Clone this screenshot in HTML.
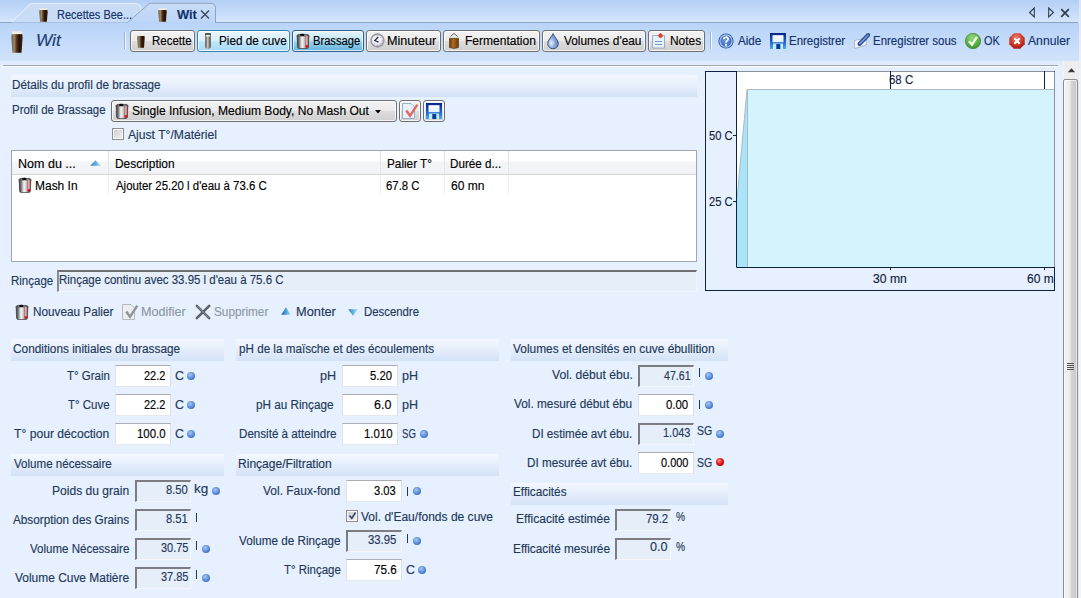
<!DOCTYPE html><html><head><meta charset="utf-8"><style>
*{margin:0;padding:0;box-sizing:border-box}
html,body{width:1081px;height:598px;overflow:hidden;background:#e7f0fe;font-family:"Liberation Sans",sans-serif;font-size:12px}
.a{position:absolute}
.ic{position:absolute;overflow:visible}
.tx{position:absolute;white-space:nowrap;line-height:14px;transform-origin:0 0;-webkit-text-stroke:0.15px currentColor}
.btn{position:absolute;border:1px solid #707070;border-radius:3px;box-shadow:inset 0 0 0 1px rgba(255,255,255,.75);background:linear-gradient(#f2f2f2 0%,#ebebeb 48%,#dddddd 52%,#cfcfcf 100%)}
.inp{position:absolute;background:#fff;border:1px solid;border-color:#abadb3 #dbdfe6 #e3e9ef #e2e3ea}
.ro{position:absolute;background:#e6eef9;border-style:solid;border-width:2px 1px 1px 2px;border-color:#7b7d80 #f4f6f8 #f4f6f8 #7b7d80}
.hdr{position:absolute;background:linear-gradient(#f5f9ff,#d3e2f8)}
</style></head><body>
<div class="a" style="left:0;top:0;width:1081px;height:23px;background:linear-gradient(#b3cff6,#d7e7fc)"></div>
<div class="a" style="left:0;top:22px;width:1078px;height:1px;background:#8da2c0"></div>
<svg class="ic" style="left:0;top:0;width:220px;height:23px" viewBox="0 0 220 23">
<defs><linearGradient id="tabA" x1="0" y1="0" x2="0" y2="1"><stop offset="0" stop-color="#cadcf6"/><stop offset="1" stop-color="#c9ddf8"/></linearGradient>
<linearGradient id="tabB" x1="0" y1="0" x2="0" y2="1"><stop offset="0" stop-color="#c8dcf7"/><stop offset="1" stop-color="#bcd5f8"/></linearGradient></defs>
<path d="M12 22.5 L30 4 Q31 3.5 32 3.5 L136 3.5 Q140 3.5 140.5 7 L140.5 22.5 Z" fill="url(#tabA)"/><path d="M12 22 L30 4 Q31 3.5 32 3.5 L136 3.5 Q140 3.5 140.5 7 L140.5 22" fill="none" stroke="#e4eefc" stroke-width="1"/>
<path d="M127 23.5 L149 3.8 Q150 3.3 151.5 3.3 L211 3.3 Q215 3.3 215.5 7 L215.5 23.5 Z" fill="url(#tabB)"/><path d="M127 23 L149 3.8 Q150 3.3 151.5 3.3 L211 3.3 Q215 3.3 215.5 7 L215.5 23" fill="none" stroke="#8fa3bf" stroke-width="1"/>
<rect x="128" y="22" width="87" height="2" fill="#bad4f8"/>
</svg>
<svg class="ic" style="left:38.5px;top:8px;width:9px;height:14px" viewBox="0 0 9 14" preserveAspectRatio="none"><defs><linearGradient id="g1" x1="0" x2="1"><stop offset="0" stop-color="#6a5a42"/><stop offset="0.25" stop-color="#9a8a6c"/><stop offset="0.45" stop-color="#5a3a1c"/><stop offset="0.7" stop-color="#241004"/><stop offset="1" stop-color="#3a2410"/></linearGradient></defs>
<path d="M0.6 1.8 H8.4 L8.7 4.2 L7.9 13.8 H1.1 L0.3 4.2 Z" fill="url(#g1)"/>
<path d="M0.6 0.2 H8.4 V2 H0.6 Z" fill="#f2ece0"/></svg>
<svg class="ic" style="left:157.5px;top:8px;width:9px;height:14px" viewBox="0 0 9 14" preserveAspectRatio="none"><defs><linearGradient id="g2" x1="0" x2="1"><stop offset="0" stop-color="#6a5a42"/><stop offset="0.25" stop-color="#9a8a6c"/><stop offset="0.45" stop-color="#5a3a1c"/><stop offset="0.7" stop-color="#241004"/><stop offset="1" stop-color="#3a2410"/></linearGradient></defs>
<path d="M0.6 1.8 H8.4 L8.7 4.2 L7.9 13.8 H1.1 L0.3 4.2 Z" fill="url(#g2)"/>
<path d="M0.6 0.2 H8.4 V2 H0.6 Z" fill="#f2ece0"/></svg>
<svg class="ic" style="left:200px;top:10px;width:10px;height:9px" viewBox="0 0 10 9"><path d="M1 0.5 L9 8.5 M9 0.5 L1 8.5" stroke="#3c4a5c" stroke-width="1.4"/></svg>
<svg class="ic" style="left:1028px;top:7px;width:8px;height:11px" viewBox="0 0 8 11"><path d="M6.3 1 L1.5 5.5 L6.3 10 Z" fill="none" stroke="#2e3e52" stroke-width="1.1"/></svg>
<svg class="ic" style="left:1047px;top:7px;width:8px;height:11px" viewBox="0 0 8 11"><path d="M1.7 1 L6.5 5.5 L1.7 10 Z" fill="none" stroke="#2e3e52" stroke-width="1.1"/></svg>
<svg class="ic" style="left:1060px;top:8px;width:10px;height:10px" viewBox="0 0 10 10"><path d="M1.2 1.2 L8.8 8.8 M8.8 1.2 L1.2 8.8" stroke="#2e3e52" stroke-width="1.7"/></svg>
<div class="a" style="left:0;top:23px;width:1079px;height:38px;background:linear-gradient(#b9d4f8,#d0e3fb)"></div>
<div class="a" style="left:0;top:61px;width:1063px;height:4px;background:#e0ecfd"></div>
<div class="a" style="left:3px;top:65px;width:1055px;height:1px;background:#a3a7ad"></div>
<div class="a" style="left:3px;top:66px;width:1055px;height:1px;background:#fbfdff"></div>
<div class="a" style="left:1079px;top:0;width:2px;height:598px;background:linear-gradient(#d8e6f9,#edf3fb 12%,#eef4fc)"></div>
<svg class="ic" style="left:11px;top:31px;width:12px;height:22px" viewBox="0 0 9 14" preserveAspectRatio="none"><defs><linearGradient id="g3" x1="0" x2="1"><stop offset="0" stop-color="#6a5a42"/><stop offset="0.25" stop-color="#9a8a6c"/><stop offset="0.45" stop-color="#5a3a1c"/><stop offset="0.7" stop-color="#241004"/><stop offset="1" stop-color="#3a2410"/></linearGradient></defs>
<path d="M0.6 1.8 H8.4 L8.7 4.2 L7.9 13.8 H1.1 L0.3 4.2 Z" fill="url(#g3)"/>
<path d="M0.6 0.2 H8.4 V2 H0.6 Z" fill="#f2ece0"/></svg>
<div class="a" style="left:124px;top:32px;width:1px;height:17px;background:#9fb3cc"></div>
<div class="a" style="left:125px;top:32px;width:1px;height:17px;background:#f4f8fd"></div>
<div class="a" style="left:710px;top:32px;width:1px;height:17px;background:#9fb3cc"></div>
<div class="a" style="left:711px;top:32px;width:1px;height:17px;background:#f4f8fd"></div>
<div class="btn" style="left:130px;top:30px;width:65px;height:22px"></div>
<div class="btn" style="left:197px;top:30px;width:93px;height:22px;border-color:#3c7fb1;background:linear-gradient(#eaf6fd 0%,#d9f0fc 45%,#bee6fd 55%,#a7d9f5 100%)"></div>
<div class="btn" style="left:292px;top:30px;width:72px;height:22px;border-color:#2c628b;background:linear-gradient(#e5f4fc 0%,#c4e5f6 45%,#98d1ef 55%,#68b3db 100%)"></div>
<div class="btn" style="left:366px;top:30px;width:75px;height:22px"></div>
<div class="btn" style="left:443px;top:30px;width:97px;height:22px"></div>
<div class="btn" style="left:542px;top:30px;width:104px;height:22px"></div>
<div class="btn" style="left:648px;top:30px;width:57px;height:22px"></div>
<svg class="ic" style="left:137px;top:34px;width:8px;height:14px" viewBox="0 0 9 14" preserveAspectRatio="none"><defs><linearGradient id="g4" x1="0" x2="1"><stop offset="0" stop-color="#6a5a42"/><stop offset="0.25" stop-color="#9a8a6c"/><stop offset="0.45" stop-color="#5a3a1c"/><stop offset="0.7" stop-color="#241004"/><stop offset="1" stop-color="#3a2410"/></linearGradient></defs>
<path d="M0.6 1.8 H8.4 L8.7 4.2 L7.9 13.8 H1.1 L0.3 4.2 Z" fill="url(#g4)"/>
<path d="M0.6 0.2 H8.4 V2 H0.6 Z" fill="#f2ece0"/></svg>
<svg class="ic" style="left:205px;top:33px;width:6px;height:16px" viewBox="0 0 6 16" preserveAspectRatio="none"><defs><linearGradient id="g5" x1="0" x2="1"><stop offset="0" stop-color="#4a3a30"/><stop offset="0.45" stop-color="#d8ccc4"/><stop offset="1" stop-color="#3e3028"/></linearGradient></defs>
<path d="M0.3 1 H5.7 V13.3 A2.7 2.7 0 0 1 0.3 13.3 Z" fill="url(#g5)"/><rect x="0" y="0" width="6" height="2.2" rx="0.6" fill="#5a5a5a"/><rect x="0.8" y="2.2" width="4.4" height="1.2" fill="#fff"/></svg>
<svg class="ic" style="left:296px;top:33px;width:14px;height:16px" viewBox="0 0 14 16" preserveAspectRatio="none"><defs><linearGradient id="g6" x1="0" x2="1"><stop offset="0" stop-color="#2a2a2a"/><stop offset="0.2" stop-color="#8a8a8a"/><stop offset="0.42" stop-color="#f8f8f8"/><stop offset="0.62" stop-color="#c4c4c4"/><stop offset="0.85" stop-color="#5a5a5a"/><stop offset="1" stop-color="#2e2e2e"/></linearGradient>
<linearGradient id="g7" x1="0" x2="1"><stop offset="0" stop-color="#b86a6a"/><stop offset="0.5" stop-color="#f0c4c4"/><stop offset="1" stop-color="#a84848"/></linearGradient></defs>
<path d="M1.2 3 Q1.2 1.4 3 1.4 L11 1.4 Q12.8 1.4 12.8 3 L12.4 14 Q12.2 15.5 10.6 15.5 L3.4 15.5 Q1.8 15.5 1.6 14 Z" fill="url(#g6)" stroke="#383838" stroke-width="0.7"/>
<path d="M0.3 2.6 H13.7 V3.4 H0.3 Z" fill="#4a4a4a" opacity="0.8"/>
<ellipse cx="6.3" cy="1.9" rx="2.3" ry="1.2" fill="#0a0a0a"/>
<rect x="9.6" y="2.8" width="2.6" height="11.2" rx="0.8" fill="url(#g7)"/>
<circle cx="10.9" cy="13.4" r="1.4" fill="#e8101a"/></svg>
<svg class="ic" style="left:370px;top:33px;width:16px;height:15px" viewBox="0 0 16 15" preserveAspectRatio="none"><defs><radialGradient id="g8" cx="0.4" cy="0.35" r="0.7"><stop offset="0" stop-color="#ffffff"/><stop offset="0.7" stop-color="#e8ecf4"/><stop offset="1" stop-color="#b0b8c8"/></radialGradient></defs>
<circle cx="7.5" cy="7.5" r="7.2" fill="#9a9ca8"/><circle cx="7.5" cy="7.5" r="5.6" fill="url(#g8)"/>
<g fill="#e080a0"><circle cx="7.5" cy="2.8" r="0.6"/><circle cx="12.2" cy="7.5" r="0.6"/><circle cx="7.5" cy="12.2" r="0.6"/><circle cx="10.8" cy="4.2" r="0.5"/><circle cx="10.8" cy="10.8" r="0.5"/><circle cx="4.2" cy="10.8" r="0.5"/></g>
<path d="M8.2 4 L4.8 7.6 L8.6 9.2" stroke="#2a3448" stroke-width="1.4" fill="none"/></svg>
<svg class="ic" style="left:449px;top:33px;width:10px;height:16px" viewBox="0 0 10 16" preserveAspectRatio="none"><defs><linearGradient id="g9" x1="0" x2="1"><stop offset="0" stop-color="#6a3a0c"/><stop offset="0.4" stop-color="#b06a1e"/><stop offset="1" stop-color="#6a380c"/></linearGradient></defs>
<path d="M5 0.5 L0.8 4 M5 0.5 L9.2 4" stroke="#505050" stroke-width="0.9"/>
<rect x="0.3" y="3.5" width="9.4" height="2" fill="#f4f0ea"/>
<path d="M0.5 5.3 H9.5 V14.5 L5 15.5 L0.5 14.5 Z" fill="url(#g9)" stroke="#4a2a0a" stroke-width="0.6"/></svg>
<svg class="ic" style="left:547px;top:33px;width:12px;height:16px" viewBox="0 0 12 16" preserveAspectRatio="none"><defs><radialGradient id="g10" cx="0.35" cy="0.62" r="0.75"><stop offset="0" stop-color="#eef2fb"/><stop offset="0.45" stop-color="#8aa8dc"/><stop offset="1" stop-color="#4a78c0"/></radialGradient></defs>
<path d="M6 0.6 C7 3.5 11.4 7.2 11.4 10.4 A5.4 5.4 0 0 1 0.6 10.4 C0.6 7.2 5 3.5 6 0.6 Z" fill="url(#g10)" stroke="#3a4e70" stroke-width="0.9"/></svg>
<svg class="ic" style="left:652px;top:33px;width:14px;height:16px" viewBox="0 0 14 16" preserveAspectRatio="none"><path d="M0.5 2.5 H12.5 V15 H0.5 Z" fill="#e4f0fc" stroke="#8a9cbc" stroke-width="0.8"/>
<path d="M3 8.5 H10 M3 11.5 H10" stroke="#7a98c8" stroke-width="1"/>
<path d="M8.2 0 L10.3 1.2 L10.8 3.6 L9 5 L6.8 4.4 L6.2 2 Z" fill="#e04030"/></svg>
<svg class="ic" style="left:718px;top:33px;width:16px;height:16px" viewBox="0 0 16 16" preserveAspectRatio="none"><defs><radialGradient id="g11" cx="0.45" cy="0.45" r="0.6"><stop offset="0" stop-color="#6a9ae0"/><stop offset="1" stop-color="#3a68c0"/></radialGradient></defs>
<circle cx="8" cy="8" r="7.6" fill="#2a4e98"/><circle cx="8" cy="8" r="6.7" fill="#b0cdf2"/><circle cx="8" cy="8" r="5.6" fill="url(#g11)"/>
<path d="M5.8 6.2 C5.8 3.6 10.2 3.6 10.2 6 C10.2 7.6 8 7.8 8 9.8" stroke="#fff" stroke-width="1.7" fill="none"/><rect x="7" y="10.9" width="2" height="1.9" fill="#fff"/></svg>
<svg class="ic" style="left:770px;top:33px;width:16px;height:16px" viewBox="0 0 16 16" preserveAspectRatio="none"><defs><linearGradient id="g12" x1="0" y1="0" x2="0" y2="1"><stop offset="0" stop-color="#0a2288"/><stop offset="0.5" stop-color="#1a5ac8"/><stop offset="1" stop-color="#48b0ee"/></linearGradient>
<linearGradient id="g13" x1="0" y1="0" x2="0" y2="1"><stop offset="0" stop-color="#ffffff"/><stop offset="1" stop-color="#dff0ff"/></linearGradient></defs>
<rect x="0" y="0" width="16" height="16" fill="url(#g12)"/>
<rect x="2.5" y="2.2" width="11" height="7" fill="url(#g13)"/>
<rect x="3" y="10.5" width="10" height="5.5" fill="#c8ecff"/><rect x="6.3" y="11" width="4" height="5" fill="#0a3a9a"/></svg>
<svg class="ic" style="left:854px;top:32px;width:17px;height:17px" viewBox="0 0 17 17" preserveAspectRatio="none"><path d="M0.5 8.5 L12 6 L12.3 13 L0.6 16.5 Z" fill="#f4f8fe" stroke="#a0a8b8" stroke-width="0.8"/>
<path d="M5.5 12 L14.2 3" stroke="#2e4a90" stroke-width="4" stroke-linecap="round"/>
<path d="M5.8 11.6 L14 3.3" stroke="#7a9ae0" stroke-width="1.6" stroke-linecap="round"/></svg>
<svg class="ic" style="left:965px;top:33px;width:16px;height:16px" viewBox="0 0 16 16" preserveAspectRatio="none"><defs><radialGradient id="g14" cx="0.45" cy="0.3" r="0.75"><stop offset="0" stop-color="#9ad880"/><stop offset="0.6" stop-color="#5ab040"/><stop offset="1" stop-color="#3a8a30"/></radialGradient></defs>
<circle cx="8" cy="8" r="7.7" fill="url(#g14)" stroke="#3a7a3a" stroke-width="0.6"/>
<path d="M3.9 8.2 L7 11.6 L12 3.8" stroke="#f4fff0" stroke-width="2.3" fill="none"/></svg>
<svg class="ic" style="left:1009px;top:33px;width:16px;height:16px" viewBox="0 0 16 16" preserveAspectRatio="none"><defs><radialGradient id="g15" cx="0.45" cy="0.3" r="0.75"><stop offset="0" stop-color="#f08070"/><stop offset="0.55" stop-color="#d03828"/><stop offset="1" stop-color="#a01810"/></radialGradient></defs>
<path d="M4.8 0.3 H11.2 L15.7 4.8 V11.2 L11.2 15.7 H4.8 L0.3 11.2 V4.8 Z" fill="url(#g15)"/>
<path d="M5.3 5.3 L10.7 10.7 M10.7 5.3 L5.3 10.7" stroke="#fff" stroke-width="2.1"/></svg>
<div class="a" style="left:1063px;top:61px;width:16px;height:537px;background:linear-gradient(90deg,#f6f6f6,#ececec 10%,#eeeeee 90%,#e8e8e8)"></div>
<svg class="ic" style="left:1067px;top:67px;width:9px;height:6px" viewBox="0 0 9 6"><path d="M0.8 5.2 L4.5 1.2 L8.2 5.2 Z" fill="#3a3a3a"/></svg>
<div class="a" style="left:1063px;top:79px;width:15px;height:530px;border:1px solid #8e8e8e;border-radius:2px;box-shadow:inset 0 0 0 1px rgba(255,255,255,.6);background:linear-gradient(90deg,#f4f4f4,#ececec 45%,#d6d6d6 55%,#c6c6c6)"></div>
<div class="a" style="left:1067px;top:363px;width:7px;height:7px;background:repeating-linear-gradient(#555 0 1px,transparent 1px 2px)"></div>
<div class="hdr" style="left:11px;top:75px;width:686px;height:22px"></div>
<div class="btn" style="left:111px;top:100px;width:286px;height:22px;border-color:#707070"></div>
<svg class="ic" style="left:375px;top:110px;width:6px;height:4px" viewBox="0 0 6 4"><path d="M0 0 H6 L3 3.5 Z" fill="#000"/></svg>
<svg class="ic" style="left:115px;top:103px;width:14px;height:16px" viewBox="0 0 14 16" preserveAspectRatio="none"><defs><linearGradient id="g16" x1="0" x2="1"><stop offset="0" stop-color="#2a2a2a"/><stop offset="0.2" stop-color="#8a8a8a"/><stop offset="0.42" stop-color="#f8f8f8"/><stop offset="0.62" stop-color="#c4c4c4"/><stop offset="0.85" stop-color="#5a5a5a"/><stop offset="1" stop-color="#2e2e2e"/></linearGradient>
<linearGradient id="g17" x1="0" x2="1"><stop offset="0" stop-color="#b86a6a"/><stop offset="0.5" stop-color="#f0c4c4"/><stop offset="1" stop-color="#a84848"/></linearGradient></defs>
<path d="M1.2 3 Q1.2 1.4 3 1.4 L11 1.4 Q12.8 1.4 12.8 3 L12.4 14 Q12.2 15.5 10.6 15.5 L3.4 15.5 Q1.8 15.5 1.6 14 Z" fill="url(#g16)" stroke="#383838" stroke-width="0.7"/>
<path d="M0.3 2.6 H13.7 V3.4 H0.3 Z" fill="#4a4a4a" opacity="0.8"/>
<ellipse cx="6.3" cy="1.9" rx="2.3" ry="1.2" fill="#0a0a0a"/>
<rect x="9.6" y="2.8" width="2.6" height="11.2" rx="0.8" fill="url(#g17)"/>
<circle cx="10.9" cy="13.4" r="1.4" fill="#e8101a"/></svg>
<div class="btn" style="left:399px;top:100px;width:22px;height:22px;border-color:#707070"></div>
<div class="btn" style="left:423px;top:100px;width:22px;height:22px;border-color:#707070"></div>
<svg class="ic" style="left:402px;top:103px;width:16px;height:16px" viewBox="0 0 16 16" preserveAspectRatio="none"><path d="M0.5 0.5 H9 L12.5 4 V15.5 H0.5 Z" fill="#e8f2fc" stroke="#8aa0c0" stroke-width="0.8"/>
<path d="M4.3 7.5 L8 12.8 L15.3 1.6" stroke="#e06a60" stroke-width="2.4" fill="none"/></svg>
<svg class="ic" style="left:426px;top:103px;width:16px;height:16px" viewBox="0 0 16 16" preserveAspectRatio="none"><defs><linearGradient id="g18" x1="0" y1="0" x2="0" y2="1"><stop offset="0" stop-color="#0a2288"/><stop offset="0.5" stop-color="#1a5ac8"/><stop offset="1" stop-color="#48b0ee"/></linearGradient>
<linearGradient id="g19" x1="0" y1="0" x2="0" y2="1"><stop offset="0" stop-color="#ffffff"/><stop offset="1" stop-color="#dff0ff"/></linearGradient></defs>
<rect x="0" y="0" width="16" height="16" fill="url(#g18)"/>
<rect x="2.5" y="2.2" width="11" height="7" fill="url(#g19)"/>
<rect x="3" y="10.5" width="10" height="5.5" fill="#c8ecff"/><rect x="6.3" y="11" width="4" height="5" fill="#0a3a9a"/></svg>
<div class="a" style="left:112px;top:128px;width:12px;height:12px;border:1px solid #8e8f8f;box-shadow:inset 0 0 0 1px #fbfbfb;background:linear-gradient(135deg,#cdcdcd,#f2f2f2)"></div>
<div class="a" style="left:11px;top:150px;width:686px;height:112px;background:#fff;border:1px solid #a0a6ae"></div>
<div class="a" style="left:12px;top:151px;width:684px;height:23px;background:linear-gradient(#ffffff 0%,#ffffff 42%,#f4f5f7 50%,#f1f2f5 100%)"></div>
<div class="a" style="left:12px;top:174px;width:684px;height:1px;background:#d5d5d5"></div>
<div class="a" style="left:108px;top:151px;width:1px;height:23px;background:#e2e4e7"></div>
<div class="a" style="left:108px;top:176px;width:1px;height:18px;background:#ececec"></div>
<div class="a" style="left:380px;top:151px;width:1px;height:23px;background:#e2e4e7"></div>
<div class="a" style="left:380px;top:176px;width:1px;height:18px;background:#ececec"></div>
<div class="a" style="left:444px;top:151px;width:1px;height:23px;background:#e2e4e7"></div>
<div class="a" style="left:444px;top:176px;width:1px;height:18px;background:#ececec"></div>
<div class="a" style="left:508px;top:151px;width:1px;height:23px;background:#e2e4e7"></div>
<div class="a" style="left:508px;top:176px;width:1px;height:18px;background:#ececec"></div>
<svg class="ic" style="left:90px;top:160px;width:11px;height:6px" viewBox="0 0 11 6"><defs><linearGradient id="srt" x1="0" x2="1"><stop offset="0" stop-color="#3a7ab8"/><stop offset="0.5" stop-color="#5ab0e0"/><stop offset="1" stop-color="#a8dcf4"/></linearGradient></defs><path d="M5.5 0.2 L10.8 5.8 H0.2 Z" fill="url(#srt)"/></svg>
<svg class="ic" style="left:18px;top:177px;width:14px;height:16px" viewBox="0 0 14 16" preserveAspectRatio="none"><defs><linearGradient id="g20" x1="0" x2="1"><stop offset="0" stop-color="#2a2a2a"/><stop offset="0.2" stop-color="#8a8a8a"/><stop offset="0.42" stop-color="#f8f8f8"/><stop offset="0.62" stop-color="#c4c4c4"/><stop offset="0.85" stop-color="#5a5a5a"/><stop offset="1" stop-color="#2e2e2e"/></linearGradient>
<linearGradient id="g21" x1="0" x2="1"><stop offset="0" stop-color="#b86a6a"/><stop offset="0.5" stop-color="#f0c4c4"/><stop offset="1" stop-color="#a84848"/></linearGradient></defs>
<path d="M1.2 3 Q1.2 1.4 3 1.4 L11 1.4 Q12.8 1.4 12.8 3 L12.4 14 Q12.2 15.5 10.6 15.5 L3.4 15.5 Q1.8 15.5 1.6 14 Z" fill="url(#g20)" stroke="#383838" stroke-width="0.7"/>
<path d="M0.3 2.6 H13.7 V3.4 H0.3 Z" fill="#4a4a4a" opacity="0.8"/>
<ellipse cx="6.3" cy="1.9" rx="2.3" ry="1.2" fill="#0a0a0a"/>
<rect x="9.6" y="2.8" width="2.6" height="11.2" rx="0.8" fill="url(#g21)"/>
<circle cx="10.9" cy="13.4" r="1.4" fill="#e8101a"/></svg>
<div class="a" style="left:57px;top:270px;width:640px;height:22px;border-style:solid;border-width:2px 1px 1px 2px;border-color:#6e7072 #f2f5f9 #f2f5f9 #8a8c8e;background:#e6eef9"></div>
<svg class="ic" style="left:15px;top:304px;width:14px;height:16px" viewBox="0 0 14 16" preserveAspectRatio="none"><defs><linearGradient id="g22" x1="0" x2="1"><stop offset="0" stop-color="#2a2a2a"/><stop offset="0.2" stop-color="#8a8a8a"/><stop offset="0.42" stop-color="#f8f8f8"/><stop offset="0.62" stop-color="#c4c4c4"/><stop offset="0.85" stop-color="#5a5a5a"/><stop offset="1" stop-color="#2e2e2e"/></linearGradient>
<linearGradient id="g23" x1="0" x2="1"><stop offset="0" stop-color="#b86a6a"/><stop offset="0.5" stop-color="#f0c4c4"/><stop offset="1" stop-color="#a84848"/></linearGradient></defs>
<path d="M1.2 3 Q1.2 1.4 3 1.4 L11 1.4 Q12.8 1.4 12.8 3 L12.4 14 Q12.2 15.5 10.6 15.5 L3.4 15.5 Q1.8 15.5 1.6 14 Z" fill="url(#g22)" stroke="#383838" stroke-width="0.7"/>
<path d="M0.3 2.6 H13.7 V3.4 H0.3 Z" fill="#4a4a4a" opacity="0.8"/>
<ellipse cx="6.3" cy="1.9" rx="2.3" ry="1.2" fill="#0a0a0a"/>
<rect x="9.6" y="2.8" width="2.6" height="11.2" rx="0.8" fill="url(#g23)"/>
<circle cx="10.9" cy="13.4" r="1.4" fill="#e8101a"/></svg>
<svg class="ic" style="left:122px;top:304px;width:16px;height:16px" viewBox="0 0 16 16" preserveAspectRatio="none"><path d="M0.5 0.5 H9 L12.5 4 V15.5 H0.5 Z" fill="#eceef0" stroke="#a8acb0" stroke-width="0.8"/>
<path d="M4.3 7.5 L8 12.8 L15.3 1.6" stroke="#909498" stroke-width="2.4" fill="none"/></svg>
<svg class="ic" style="left:195px;top:304px;width:16px;height:16px" viewBox="0 0 16 16" preserveAspectRatio="none"><path d="M1.8 1.8 L14.2 14.2 M14.2 1.8 L1.8 14.2" stroke="#5e6268" stroke-width="2.6" stroke-linecap="round"/>
<path d="M2.2 1.8 L14 13.8" stroke="#9aa0a8" stroke-width="0.8"/></svg>
<svg class="ic" style="left:281px;top:307px;width:10px;height:8px" viewBox="0 0 10 8" preserveAspectRatio="none"><defs><linearGradient id="g24" x1="0" x2="1"><stop offset="0" stop-color="#1a5aa0"/><stop offset="0.5" stop-color="#4aa0e0"/><stop offset="1" stop-color="#b0e0f8"/></linearGradient></defs><path d="M5 0.3 L9.8 7.7 H0.2 Z" fill="url(#g24)"/></svg>
<svg class="ic" style="left:348px;top:309px;width:10px;height:7px" viewBox="0 0 10 7" preserveAspectRatio="none"><defs><linearGradient id="g25" x1="0" x2="1"><stop offset="0" stop-color="#2a70b0"/><stop offset="0.5" stop-color="#5ab8e8"/><stop offset="1" stop-color="#a8dcf4"/></linearGradient></defs><path d="M0.2 0.3 H9.8 L5 6.7 Z" fill="url(#g25)"/></svg>
<div class="a" style="left:705px;top:71px;width:350px;height:220px;border:1px solid #0f2340"></div>
<svg class="ic" style="left:705px;top:71px;width:350px;height:220px" viewBox="705 71 350 220">
<rect x="736.5" y="71.5" width="318" height="196" fill="#fff"/>
<path d="M737 267 L737 199 L747 89.5 L1054 89.5 L1054 267 Z" fill="#d3f3fd"/>
<path d="M737 267 L737 199 L747 89.5 L747 267 Z" fill="#a9e4fa"/>
<path d="M737 199 L747 89.5 L1054 89.5" fill="none" stroke="#a9bcc4" stroke-width="1"/>
<path d="M747.5 89.5 V267" stroke="#a9bcc4" stroke-width="1"/>
<path d="M736.5 71 V267.5 H1055" fill="none" stroke="#0f2340" stroke-width="1"/>
<path d="M890.5 71 V89 M1044.5 71 V89 M733 135.5 H736.5 M733 201.5 H736.5 M890.5 267 V270 M1044.5 267 V270" stroke="#0f2340" stroke-width="1"/>
</svg>
<div class="hdr" style="left:11px;top:339px;width:213px;height:22px"></div>
<div class="hdr" style="left:236px;top:339px;width:263px;height:22px"></div>
<div class="hdr" style="left:511px;top:339px;width:217px;height:22px"></div>
<div class="hdr" style="left:11px;top:454px;width:213px;height:22px"></div>
<div class="hdr" style="left:236px;top:454px;width:263px;height:22px"></div>
<div class="hdr" style="left:511px;top:483px;width:217px;height:22px"></div>
<div class="inp" style="left:115px;top:365px;width:56px;height:22px"></div>
<svg class="ic" style="left:187px;top:372px;width:8px;height:8px" viewBox="0 0 8 8" preserveAspectRatio="none"><defs><radialGradient id="g26" cx="0.4" cy="0.35" r="0.7"><stop offset="0" stop-color="#a8c8f4"/><stop offset="0.5" stop-color="#6a9ae0"/><stop offset="1" stop-color="#3a6cc0"/></radialGradient></defs><circle cx="4" cy="4" r="4" fill="url(#g26)"/></svg>
<div class="inp" style="left:115px;top:394px;width:56px;height:22px"></div>
<svg class="ic" style="left:187px;top:401px;width:8px;height:8px" viewBox="0 0 8 8" preserveAspectRatio="none"><defs><radialGradient id="g27" cx="0.4" cy="0.35" r="0.7"><stop offset="0" stop-color="#a8c8f4"/><stop offset="0.5" stop-color="#6a9ae0"/><stop offset="1" stop-color="#3a6cc0"/></radialGradient></defs><circle cx="4" cy="4" r="4" fill="url(#g27)"/></svg>
<div class="inp" style="left:115px;top:423px;width:56px;height:22px"></div>
<svg class="ic" style="left:187px;top:430px;width:8px;height:8px" viewBox="0 0 8 8" preserveAspectRatio="none"><defs><radialGradient id="g28" cx="0.4" cy="0.35" r="0.7"><stop offset="0" stop-color="#a8c8f4"/><stop offset="0.5" stop-color="#6a9ae0"/><stop offset="1" stop-color="#3a6cc0"/></radialGradient></defs><circle cx="4" cy="4" r="4" fill="url(#g28)"/></svg>
<div class="ro" style="left:135px;top:480px;width:56px;height:22px"></div>
<div class="ro" style="left:135px;top:509px;width:56px;height:22px"></div>
<div class="ro" style="left:135px;top:538px;width:56px;height:22px"></div>
<div class="ro" style="left:135px;top:567px;width:56px;height:22px"></div>
<div class="inp" style="left:342px;top:365px;width:56px;height:22px"></div>
<div class="inp" style="left:342px;top:394px;width:56px;height:22px"></div>
<div class="inp" style="left:342px;top:423px;width:56px;height:22px"></div>
<svg class="ic" style="left:419.5px;top:430px;width:8px;height:8px" viewBox="0 0 8 8" preserveAspectRatio="none"><defs><radialGradient id="g29" cx="0.4" cy="0.35" r="0.7"><stop offset="0" stop-color="#a8c8f4"/><stop offset="0.5" stop-color="#6a9ae0"/><stop offset="1" stop-color="#3a6cc0"/></radialGradient></defs><circle cx="4" cy="4" r="4" fill="url(#g29)"/></svg>
<div class="inp" style="left:346px;top:480px;width:56px;height:22px"></div>
<div class="ro" style="left:346px;top:530px;width:56px;height:22px"></div>
<div class="inp" style="left:346px;top:559px;width:56px;height:22px"></div>
<div class="a" style="left:346px;top:510px;width:12px;height:12px;border:1px solid #8e8f8f;box-shadow:inset 0 0 0 1px #fbfbfb;background:linear-gradient(135deg,#cdcdcd,#f2f2f2)"></div>
<svg class="ic" style="left:348px;top:511px;width:9px;height:9px" viewBox="0 0 9 9"><path d="M1.5 4.5 L3.8 7.3 L7.5 1.5" fill="none" stroke="#3a4a6a" stroke-width="1.6"/></svg>
<svg class="ic" style="left:212px;top:487px;width:8px;height:8px" viewBox="0 0 8 8" preserveAspectRatio="none"><defs><radialGradient id="g30" cx="0.4" cy="0.35" r="0.7"><stop offset="0" stop-color="#a8c8f4"/><stop offset="0.5" stop-color="#6a9ae0"/><stop offset="1" stop-color="#3a6cc0"/></radialGradient></defs><circle cx="4" cy="4" r="4" fill="url(#g30)"/></svg>
<svg class="ic" style="left:202px;top:545px;width:8px;height:8px" viewBox="0 0 8 8" preserveAspectRatio="none"><defs><radialGradient id="g31" cx="0.4" cy="0.35" r="0.7"><stop offset="0" stop-color="#a8c8f4"/><stop offset="0.5" stop-color="#6a9ae0"/><stop offset="1" stop-color="#3a6cc0"/></radialGradient></defs><circle cx="4" cy="4" r="4" fill="url(#g31)"/></svg>
<svg class="ic" style="left:202px;top:574px;width:8px;height:8px" viewBox="0 0 8 8" preserveAspectRatio="none"><defs><radialGradient id="g32" cx="0.4" cy="0.35" r="0.7"><stop offset="0" stop-color="#a8c8f4"/><stop offset="0.5" stop-color="#6a9ae0"/><stop offset="1" stop-color="#3a6cc0"/></radialGradient></defs><circle cx="4" cy="4" r="4" fill="url(#g32)"/></svg>
<svg class="ic" style="left:413px;top:487px;width:8px;height:8px" viewBox="0 0 8 8" preserveAspectRatio="none"><defs><radialGradient id="g33" cx="0.4" cy="0.35" r="0.7"><stop offset="0" stop-color="#a8c8f4"/><stop offset="0.5" stop-color="#6a9ae0"/><stop offset="1" stop-color="#3a6cc0"/></radialGradient></defs><circle cx="4" cy="4" r="4" fill="url(#g33)"/></svg>
<svg class="ic" style="left:413px;top:537px;width:8px;height:8px" viewBox="0 0 8 8" preserveAspectRatio="none"><defs><radialGradient id="g34" cx="0.4" cy="0.35" r="0.7"><stop offset="0" stop-color="#a8c8f4"/><stop offset="0.5" stop-color="#6a9ae0"/><stop offset="1" stop-color="#3a6cc0"/></radialGradient></defs><circle cx="4" cy="4" r="4" fill="url(#g34)"/></svg>
<svg class="ic" style="left:418px;top:566px;width:8px;height:8px" viewBox="0 0 8 8" preserveAspectRatio="none"><defs><radialGradient id="g35" cx="0.4" cy="0.35" r="0.7"><stop offset="0" stop-color="#a8c8f4"/><stop offset="0.5" stop-color="#6a9ae0"/><stop offset="1" stop-color="#3a6cc0"/></radialGradient></defs><circle cx="4" cy="4" r="4" fill="url(#g35)"/></svg>
<div class="ro" style="left:638px;top:365px;width:56px;height:22px"></div>
<div class="inp" style="left:638px;top:394px;width:56px;height:22px"></div>
<div class="ro" style="left:638px;top:423px;width:56px;height:22px"></div>
<div class="inp" style="left:638px;top:452px;width:56px;height:22px"></div>
<svg class="ic" style="left:705px;top:372px;width:8px;height:8px" viewBox="0 0 8 8" preserveAspectRatio="none"><defs><radialGradient id="g36" cx="0.4" cy="0.35" r="0.7"><stop offset="0" stop-color="#a8c8f4"/><stop offset="0.5" stop-color="#6a9ae0"/><stop offset="1" stop-color="#3a6cc0"/></radialGradient></defs><circle cx="4" cy="4" r="4" fill="url(#g36)"/></svg>
<svg class="ic" style="left:705px;top:401px;width:8px;height:8px" viewBox="0 0 8 8" preserveAspectRatio="none"><defs><radialGradient id="g37" cx="0.4" cy="0.35" r="0.7"><stop offset="0" stop-color="#a8c8f4"/><stop offset="0.5" stop-color="#6a9ae0"/><stop offset="1" stop-color="#3a6cc0"/></radialGradient></defs><circle cx="4" cy="4" r="4" fill="url(#g37)"/></svg>
<svg class="ic" style="left:716px;top:430px;width:8px;height:8px" viewBox="0 0 8 8" preserveAspectRatio="none"><defs><radialGradient id="g38" cx="0.4" cy="0.35" r="0.7"><stop offset="0" stop-color="#a8c8f4"/><stop offset="0.5" stop-color="#6a9ae0"/><stop offset="1" stop-color="#3a6cc0"/></radialGradient></defs><circle cx="4" cy="4" r="4" fill="url(#g38)"/></svg>
<svg class="ic" style="left:716px;top:458px;width:8px;height:8px" viewBox="0 0 8 8" preserveAspectRatio="none"><defs><radialGradient id="g39" cx="0.4" cy="0.35" r="0.7"><stop offset="0" stop-color="#ff9a9a"/><stop offset="0.5" stop-color="#e82020"/><stop offset="1" stop-color="#b00000"/></radialGradient></defs><circle cx="4" cy="4" r="4" fill="url(#g39)"/></svg>
<div class="ro" style="left:615px;top:509px;width:56px;height:22px"></div>
<div class="ro" style="left:615px;top:538px;width:56px;height:22px"></div>
<div class="a" style="left:196px;top:513px;width:1px;height:9px;background:#1e395b"></div>
<div class="a" style="left:196px;top:541px;width:1px;height:9px;background:#1e395b"></div>
<div class="a" style="left:196px;top:570px;width:1px;height:9px;background:#1e395b"></div>
<div class="a" style="left:407px;top:487px;width:1px;height:9px;background:#1e395b"></div>
<div class="a" style="left:407px;top:534px;width:1px;height:9px;background:#1e395b"></div>
<div class="a" style="left:699px;top:368px;width:1px;height:9px;background:#1e395b"></div>
<div class="a" style="left:699px;top:400px;width:1px;height:9px;background:#1e395b"></div>
<div class="tx" id="t0" style="left:57.16px;top:8px;color:#15336b;transform:scaleX(0.9150);">Recettes Bee...</div>
<div class="tx" id="t1" style="left:176.50px;top:8px;color:#15336b;font-weight:bold;transform:scaleX(1.0722);">Wit</div>
<div class="tx" id="t2" style="left:35.69px;top:34px;color:#1b3d73;font-size:17px;font-style:italic;transform:scaleX(1.0125);">Wit</div>
<div class="tx" id="t3" style="left:151.54px;top:34px;color:#000000;transform:scaleX(0.9575);">Recette</div>
<div class="tx" id="t4" style="left:218.52px;top:34px;color:#000000;transform:scaleX(0.9750);">Pied de cuve</div>
<div class="tx" id="t5" style="left:313.19px;top:34px;color:#000000;transform:scaleX(0.9286);">Brassage</div>
<div class="tx" id="t6" style="left:387.45px;top:34px;color:#000000;transform:scaleX(1.0522);">Minuteur</div>
<div class="tx" id="t7" style="left:464.70px;top:34px;color:#000000;transform:scaleX(1.0029);">Fermentation</div>
<div class="tx" id="t8" style="left:564.30px;top:34px;color:#000000;transform:scaleX(0.9885);">Volumes d'eau</div>
<div class="tx" id="t9" style="left:669.71px;top:34px;color:#000000;transform:scaleX(0.9933);">Notes</div>
<div class="tx" id="t10" style="left:737.50px;top:34px;color:#15336b;transform:scaleX(0.9708);">Aide</div>
<div class="tx" id="t11" style="left:788.54px;top:34px;color:#15336b;transform:scaleX(0.9569);">Enregistrer</div>
<div class="tx" id="t12" style="left:872.54px;top:34px;color:#15336b;transform:scaleX(0.9570);">Enregistrer sous</div>
<div class="tx" id="t13" style="left:983.93px;top:34px;color:#15336b;transform:scaleX(0.9059);">OK</div>
<div class="tx" id="t14" style="left:1028.30px;top:34px;color:#15336b;transform:scaleX(1.0146);">Annuler</div>
<div class="tx" id="t15" style="left:12.13px;top:78px;color:#1e395b;transform:scaleX(0.9768);">Détails du profil de brassage</div>
<div class="tx" id="t16" style="left:12.16px;top:103px;color:#1e395b;transform:scaleX(0.9536);">Profil de Brassage</div>
<div class="tx" id="t17" style="left:132.09px;top:104px;color:#000000;transform:scaleX(1.0073);">Single Infusion, Medium Body, No Mash Out</div>
<div class="tx" id="t18" style="left:127.90px;top:128px;color:#1e395b;transform:scaleX(1.0114);">Ajust T°/Matériel</div>
<div class="tx" id="t19" style="left:18.05px;top:157px;color:#000000;transform:scaleX(1.0434);">Nom du ...</div>
<div class="tx" id="t20" style="left:114.91px;top:157px;color:#000000;transform:scaleX(0.9932);">Description</div>
<div class="tx" id="t21" style="left:386.52px;top:157px;color:#000000;transform:scaleX(0.9795);">Palier T°</div>
<div class="tx" id="t22" style="left:450.33px;top:157px;color:#000000;transform:scaleX(0.9706);">Durée d...</div>
<div class="tx" id="t23" style="left:34.50px;top:179px;color:#000000;transform:scaleX(0.9976);">Mash In</div>
<div class="tx" id="t24" style="left:115.89px;top:179px;color:#000000;transform:scaleX(0.9513);">Ajouter 25.20 l d'eau à 73.6 C</div>
<div class="tx" id="t25" style="left:385.75px;top:179px;color:#000000;transform:scaleX(0.9471);">67.8 C</div>
<div class="tx" id="t26" style="left:450.50px;top:179px;color:#000000;transform:scaleX(1.0062);">60 mn</div>
<div class="tx" id="t27" style="left:10.54px;top:274px;color:#1e395b;transform:scaleX(0.9581);">Rinçage</div>
<div class="tx" id="t28" style="left:59.33px;top:273px;color:#1e395b;transform:scaleX(0.9547);">Rinçage continu avec 33.95 l d'eau à 75.6 C</div>
<div class="tx" id="t29" style="left:32.72px;top:305px;color:#1e395b;transform:scaleX(0.9790);">Nouveau Palier</div>
<div class="tx" id="t30" style="left:140.86px;top:305px;color:#8d99a6;transform:scaleX(1.0500);">Modifier</div>
<div class="tx" id="t31" style="left:213.91px;top:305px;color:#8d99a6;transform:scaleX(0.9818);">Supprimer</div>
<div class="tx" id="t32" style="left:296.23px;top:305px;color:#1e395b;transform:scaleX(1.0667);">Monter</div>
<div class="tx" id="t33" style="left:363.94px;top:305px;color:#1e395b;transform:scaleX(0.9474);">Descendre</div>
<div class="tx" id="t34" style="left:888.55px;top:73px;color:#0f2340;transform:scaleX(0.9542);">68 C</div>
<div class="tx" id="t35" style="left:708.73px;top:129px;color:#0f2340;transform:scaleX(0.9292);">50 C</div>
<div class="tx" id="t36" style="left:708.73px;top:195px;color:#0f2340;transform:scaleX(0.9292);">25 C</div>
<div class="tx" id="t37" style="left:873.29px;top:272px;color:#0f2340;transform:scaleX(1.0125);">30 mn</div>
<div class="tx" id="t38" style="left:1027.10px;top:272px;color:#0f2340;"><span style="display:inline-block;overflow:hidden;width:26.9px;vertical-align:top">60 mn</span></div>
<div class="tx" id="t39" style="left:13.10px;top:342px;color:#1e395b;transform:scaleX(0.9864);">Conditions initiales du brassage</div>
<div class="tx" id="t40" style="left:66.89px;top:369px;color:#1e395b;transform:scaleX(0.9591);">T° Grain</div>
<div class="tx" id="t41" style="left:68.09px;top:398px;color:#1e395b;transform:scaleX(0.9558);">T° Cuve</div>
<div class="tx" id="t42" style="left:14.10px;top:427px;color:#1e395b;transform:scaleX(1.0117);">T° pour décoction</div>
<div class="tx" id="t43" style="left:143.59px;top:369px;color:#000000;transform:scaleX(0.9136);">22.2</div>
<div class="tx" id="t44" style="left:143.59px;top:398px;color:#000000;transform:scaleX(0.9136);">22.2</div>
<div class="tx" id="t45" style="left:136.52px;top:427px;color:#000000;transform:scaleX(0.9517);">100.0</div>
<div class="tx" id="t46" style="left:174.88px;top:369px;color:#1e395b;transform:scaleX(1.0286);">C</div>
<div class="tx" id="t47" style="left:174.88px;top:398px;color:#1e395b;transform:scaleX(1.0286);">C</div>
<div class="tx" id="t48" style="left:174.88px;top:427px;color:#1e395b;transform:scaleX(1.0286);">C</div>
<div class="tx" id="t49" style="left:13.70px;top:457px;color:#1e395b;transform:scaleX(0.9634);">Volume nécessaire</div>
<div class="tx" id="t50" style="left:51.89px;top:484px;color:#1e395b;transform:scaleX(1.0067);">Poids du grain</div>
<div class="tx" id="t51" style="left:13.10px;top:513px;color:#1e395b;transform:scaleX(0.9780);">Absorption des Grains</div>
<div class="tx" id="t52" style="left:29.89px;top:542px;color:#1e395b;transform:scaleX(0.9612);">Volume Nécessaire</div>
<div class="tx" id="t53" style="left:15.10px;top:571px;color:#1e395b;transform:scaleX(0.9947);">Volume Cuve Matière</div>
<div class="tx" id="t54" style="left:165.53px;top:483px;color:#1e395b;transform:scaleX(0.9348);">8.50</div>
<div class="tx" id="t55" style="left:165.53px;top:512px;color:#1e395b;transform:scaleX(0.9348);">8.51</div>
<div class="tx" id="t56" style="left:160.54px;top:541px;color:#1e395b;transform:scaleX(0.9138);">30.75</div>
<div class="tx" id="t57" style="left:160.54px;top:570px;color:#1e395b;transform:scaleX(0.9138);">37.85</div>
<div class="tx" id="t58" style="left:194.16px;top:482px;color:#1e395b;transform:scaleX(1.1273);">kg</div>
<div class="tx" id="t59" style="left:238.51px;top:342px;color:#1e395b;transform:scaleX(0.9720);">pH de la maïsche et des écoulements</div>
<div class="tx" id="t60" style="left:319.86px;top:369px;color:#1e395b;transform:scaleX(1.0500);">pH</div>
<div class="tx" id="t61" style="left:255.92px;top:398px;color:#1e395b;transform:scaleX(0.9756);">pH au Rinçage</div>
<div class="tx" id="t62" style="left:238.52px;top:427px;color:#1e395b;transform:scaleX(0.9680);">Densité à atteindre</div>
<div class="tx" id="t63" style="left:369.53px;top:369px;color:#000000;transform:scaleX(0.9391);">5.20</div>
<div class="tx" id="t64" style="left:374.48px;top:398px;color:#000000;transform:scaleX(1.0375);">6.0</div>
<div class="tx" id="t65" style="left:363.52px;top:427px;color:#000000;transform:scaleX(0.9517);">1.010</div>
<div class="tx" id="t66" style="left:401.87px;top:369px;color:#1e395b;transform:scaleX(1.0429);">pH</div>
<div class="tx" id="t67" style="left:401.87px;top:398px;color:#1e395b;transform:scaleX(1.0429);">pH</div>
<div class="tx" id="t68" style="left:401.70px;top:427px;color:#1e395b;transform:scaleX(0.8000);">SG</div>
<div class="tx" id="t69" style="left:237.70px;top:457px;color:#1e395b;transform:scaleX(1.0043);">Rinçage/Filtration</div>
<div class="tx" id="t70" style="left:262.90px;top:484px;color:#1e395b;transform:scaleX(0.9974);">Vol. Faux-fond</div>
<div class="tx" id="t71" style="left:360.70px;top:510px;color:#1e395b;transform:scaleX(1.0023);">Vol. d'Eau/fonds de cuve</div>
<div class="tx" id="t72" style="left:238.70px;top:534px;color:#1e395b;transform:scaleX(0.9750);">Volume de Rinçage</div>
<div class="tx" id="t73" style="left:283.70px;top:563px;color:#1e395b;transform:scaleX(0.9559);">T° Rinçage</div>
<div class="tx" id="t74" style="left:373.53px;top:484px;color:#000000;transform:scaleX(0.9304);">3.03</div>
<div class="tx" id="t75" style="left:367.53px;top:533px;color:#1e395b;transform:scaleX(0.9448);">33.95</div>
<div class="tx" id="t76" style="left:373.51px;top:563px;color:#000000;transform:scaleX(0.9727);">75.6</div>
<div class="tx" id="t77" style="left:405.88px;top:563px;color:#1e395b;transform:scaleX(1.0286);">C</div>
<div class="tx" id="t78" style="left:513.10px;top:342px;color:#1e395b;transform:scaleX(0.9906);">Volumes et densités en cuve ébullition</div>
<div class="tx" id="t79" style="left:552.10px;top:368px;color:#1e395b;transform:scaleX(1.0101);">Vol. début ébu.</div>
<div class="tx" id="t80" style="left:513.50px;top:397px;color:#1e395b;transform:scaleX(0.9842);">Vol. mesuré début ébu</div>
<div class="tx" id="t81" style="left:531.92px;top:427px;color:#1e395b;transform:scaleX(0.9696);">DI estimée avt ébu.</div>
<div class="tx" id="t82" style="left:527.33px;top:456px;color:#1e395b;transform:scaleX(0.9736);">DI mesurée avt ébu.</div>
<div class="tx" id="t83" style="left:663.88px;top:369px;color:#1e395b;transform:scaleX(0.8833);">47.61</div>
<div class="tx" id="t84" style="left:665.94px;top:398px;color:#000000;transform:scaleX(0.9500);">0.00</div>
<div class="tx" id="t85" style="left:662.97px;top:426px;color:#1e395b;transform:scaleX(0.9138);">1.043</div>
<div class="tx" id="t86" style="left:660.73px;top:456px;color:#000000;transform:scaleX(0.9138);">0.000</div>
<div class="tx" id="t87" style="left:697.06px;top:424px;color:#1e395b;transform:scaleX(0.8800);">SG</div>
<div class="tx" id="t88" style="left:697.06px;top:456px;color:#1e395b;transform:scaleX(0.8800);">SG</div>
<div class="tx" id="t89" style="left:512.52px;top:485px;color:#1e395b;transform:scaleX(0.9830);">Efficacités</div>
<div class="tx" id="t90" style="left:516.10px;top:512px;color:#1e395b;">Efficacité estimée</div>
<div class="tx" id="t91" style="left:512.52px;top:542px;color:#1e395b;transform:scaleX(0.9845);">Efficacité mesurée</div>
<div class="tx" id="t92" style="left:645.53px;top:512px;color:#1e395b;transform:scaleX(0.9478);">79.2</div>
<div class="tx" id="t93" style="left:650.48px;top:540px;color:#1e395b;transform:scaleX(1.0500);">0.0</div>
<div class="tx" id="t94" style="left:676.13px;top:510px;color:#1e395b;transform:scaleX(0.8500);">%</div>
<div class="tx" id="t95" style="left:676.13px;top:540px;color:#1e395b;transform:scaleX(0.8500);">%</div>
</body></html>
